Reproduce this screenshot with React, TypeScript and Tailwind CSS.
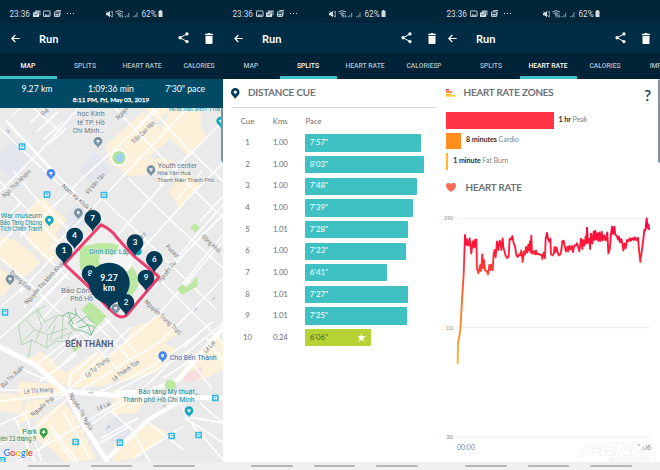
import React from "react";

const proxima = "font-[Lato,sans-serif]";
const roboto = "font-[Roboto,sans-serif]";

function PhotoIcon() {
  return (
    <svg className="h-[7.5px] w-[7.5px]" viewBox="0 0 16 16">
      <rect x="1" y="2" width="14" height="12" rx="1" fill="none" stroke="#cdd6dc" strokeWidth="2" />
      <path d="M3 12l3-4 3 3 2-2 3 3z" fill="#cdd6dc" />
    </svg>
  );
}

function MailIcon() {
  return (
    <svg className="h-[7.5px] w-[7.5px]" viewBox="0 0 16 16">
      <path d="M4 1h12v10h-2V4H4z" fill="#aebbc5" />
      <rect x="0" y="5" width="13" height="10" rx="1" fill="#dbe2e6" />
      <path d="M2 8l4 3 5-4" stroke="#012a41" strokeWidth="1.6" fill="none" />
    </svg>
  );
}

function GalleryIcon() {
  return (
    <svg className="h-[7.5px] w-[7.5px]" viewBox="0 0 16 16">
      <path d="M5 1h10v10" fill="none" stroke="#cdd6dc" strokeWidth="2" />
      <rect x="1" y="4" width="11" height="10" rx="1" fill="none" stroke="#dbe2e6" strokeWidth="2" />
      <path d="M3 12V8h7v4z" fill="#cdd6dc" />
    </svg>
  );
}

function StatusBar({ icons }: { icons: React.ReactNode[] }) {
  return (
    <div className={`${roboto} flex h-[23px] shrink-0 items-end bg-[#01263a] pb-[3.5px] pl-[9.5px] text-[#d5dde2]`}>
      <div className="flex w-[95px] items-center">
        <span className="w-[23.5px] text-[8.2px] leading-[12px]">23:36</span>
        <div className="flex gap-[2.8px]">
          {icons.map((icon, i) => (
            <React.Fragment key={i}>{icon}</React.Fragment>
          ))}
        </div>
        <div className="ml-[6px] flex gap-[1.6px]">
          <i className="h-[1.2px] w-[1.4px] bg-[#d5dde2]" />
          <i className="h-[1.2px] w-[1.4px] bg-[#d5dde2]" />
          <i className="h-[1.2px] w-[1.4px] bg-[#d5dde2]" />
        </div>
      </div>
      <div className="flex h-[12px] items-center">
        <svg className="h-[10px] w-[37px]" viewBox="0 0 111 30">
          <path d="M3 12h4l8-6v19l-8-6H3z" fill="#d5dde2" />
          <path d="M4 7l18 18M17 6l4 5M22 6v18" stroke="#d5dde2" strokeWidth="2" fill="none" />
          <path d="M31 9q11-8 23 0M35 14q7-5 15 0M39 18q4-3 7 0" stroke="#bccad2" strokeWidth="2.8" fill="none" />
          <path d="M42 24v-7m5 9v-8l-3 4m8-6v9l3-4" stroke="#bccad2" strokeWidth="2" fill="none" />
          <path d="M61 25V21M66 25v-7M71 25V11M86 25v-4M91 25v-7M96 25V10" stroke="#7f95a2" strokeWidth="3.2" />
        </svg>
        <span className="w-[16.5px] whitespace-nowrap text-[8.2px] leading-[12px]">62%</span>
        <svg className="h-[7px] w-[5px]" viewBox="0 0 10 14">
          <path d="M3 0h4v2h2v12H1V2h2z" fill="#d5dde2" />
        </svg>
      </div>
    </div>
  );
}

function AppBar() {
  return (
    <div className={`${proxima} flex h-[30px] shrink-0 items-center bg-[#002d46] pl-[10.5px] pr-[9.8px] text-white`}>
      <svg className="h-[9px] w-[9px]" viewBox="0 0 27 27">
        <path d="M26 13.5H3M13 3L2.500 13.500 13 24" fill="none" stroke="#fff" strokeWidth="3.400" />
      </svg>
      <span className="ml-[19.5px] text-[11px] font-bold leading-none tracking-[0.1px]">Run</span>
      <svg className="ml-auto h-[11.5px] w-[11px]" viewBox="0 0 33 35">
        <path d="M27 6L6 17.500 27 29" stroke="#fff" strokeWidth="3" fill="none" />
        <circle cx="27" cy="6" r="5" fill="#fff" />
        <circle cx="6" cy="17.500" r="5" fill="#fff" />
        <circle cx="27" cy="29" r="5" fill="#fff" />
      </svg>
      <svg className="ml-[16px] h-[11px] w-[8px]" viewBox="0 0 24 33">
        <path d="M0 2h7l2-2h6l2 2h7v4H0zM1.500 8h21v22q0 3-3 3h-15q-3 0-3-3z" fill="#fff" />
      </svg>
    </div>
  );
}

function Tabs({ active, shifted = false }: { active: string; shifted?: boolean }) {
  return (
    <div className={`${roboto} h-[26px] shrink-0 overflow-hidden bg-[#012338]`}>
      <div className={`flex h-full w-[285px] ${shifted ? "-ml-[31px]" : ""}`}>
        {["MAP", "SPLITS", "HEART RATE", "CALORIES", "IMPACT"].map((t) => (
          <div
            key={t}
            className={`flex h-full w-[57px] items-center justify-center whitespace-nowrap border-b-[3px] pr-[1px] pt-[3px] text-[6.800px] font-medium ${
              t === active ? "border-[#3fc1c3] text-white" : "border-transparent text-[#b3c0c8]"
            }`}
          >
            {t}
          </div>
        ))}
      </div>
    </div>
  );
}

function NavBar() {
  return (
    <div className="flex h-[8px] shrink-0 items-start gap-[21px] bg-[#f0f0f0] pl-[28px] pt-[3px]">
      <i className="h-[2px] w-[41.5px] rounded-full bg-[#b5b5b5]" />
      <i className="h-[2px] w-[41.5px] rounded-full bg-[#b5b5b5]" />
      <i className="h-[2px] w-[41.5px] rounded-full bg-[#b5b5b5]" />
    </div>
  );
}

function Label(p: {
  x: number;
  y: number;
  w: number;
  t: string;
  c?: string;
  s?: number;
  r?: number;
  b?: number;
}) {
  return (
    <text
      x={p.x}
      y={p.y}
      textLength={p.w}
      lengthAdjust="spacingAndGlyphs"
      fill={p.c ?? "#74767b"}
      fontSize={p.s ?? 19}
      fontWeight={p.b ?? 400}
      stroke="#f4f4f4"
      strokeOpacity="0.7"
      strokeWidth="2.500"
      paintOrder="stroke"
      transform={p.r ? `rotate(${p.r} ${p.x} ${p.y})` : undefined}
    >
      {p.t}
    </text>
  );
}

function Cue({ x, y, n }: { x: number; y: number; n: string }) {
  return (
    <g>
      <path d={`M${x} ${y + 40}C${x - 5} ${y + 24} ${x - 25} ${y + 19} ${x - 25} ${y}a25 25 0 0 1 50 0C${x + 25} ${y + 19} ${x + 5} ${y + 24} ${x} ${y + 40}z`} fill="#033a55" />
      <text x={x} y={y + 7} textAnchor="middle" fontSize="24" fontWeight="700" fontFamily="Lato, sans-serif" fill="#fff">
        {n}
      </text>
    </g>
  );
}

function Poi({ x, y, c, s = 1 }: { x: number; y: number; c: string; s?: number }) {
  return (
    <g transform={`translate(${x} ${y}) scale(${s})`}>
      <path d="M0 20C-2 11-13 9-13-1a13 13 0 0 1 26 0C13 9 2 11 0 20z" fill={c} />
      <path d="M-5-5H5L4 2H-4z" fill="#e9f1f7" />
      <circle cx="0" cy="4.500" r="1.500" fill="#fff" />
    </g>
  );
}

function Bus({ x, y }: { x: number; y: number }) {
  return (
    <g transform={`translate(${x} ${y})`}>
      <rect x="-10" y="-10" width="20" height="20" rx="2" fill="#2fb8e8" />
      <rect x="-5" y="-6" width="10" height="10" rx="1.500" fill="#fff" />
      <path d="M-3-4h6v4h-6z" fill="#2fb8e8" />
      <path d="M-3.500 4v3M3.500 4v3" stroke="#fff" strokeWidth="2" />
    </g>
  );
}

function RouteMap() {
  return (
    <svg className={`${roboto} block h-[354px] w-[223px] shrink-0`} viewBox="0 0 669 1062">
      <rect width="669" height="1062" fill="#eaeaeb" />
      <g fill="#e3e7ed">
        <path d="M0 140L45 95 105 150 40 220 0 185zM235 185L285 130 335 185 280 235zM190 330L225 290 270 330 225 375zM310 960L350 920 400 965 360 1030z" />
      </g>
      <g fill="#fcf1d8">
        <path d="M315 115L430 10 510 90 445 150 520 155 495 195 385 205 330 160z" />
        <path d="M510 0H610L600 45 620 90 560 140 485 65z" />
        <path d="M430 0h80l-35 40zM505 250l50-65 45 45-60 75z" />
        <path d="M80 310l45-45 75 70-35 45 30 35-40 55-55-50-25-30 20-30zM0 385l45 10 50 40 25 30-55 50-65-65z" />
        <path d="M0 480l45 35-35 50-10-5zM80 755l45-25 70 65 95-65 40 30-95 75-45-2-40-35z" />
        <path d="M210 840l65-60 90-65 35-60 50-12 35-30 55 60-60 40-60 65-105 55z" />
        <path d="M365 785l100-85 65 20-55 70-120 35z" />
        <path d="M55 820l120 10 15 25-50 10-85 15zM0 855l70 8-5 55-65-10z" />
        <path d="M110 940l80-60 40 55 60 120-95 7-55-50-45-25z" />
        <path d="M80 880l90-12-60 60-60 20z" />
        <path d="M340 845l110 10-40 60-75 5zM340 1010l110-65 55 30-95 75-70 12z" />
        <path d="M525 815l70-90 74 5v55l-60 30zM600 735l45-65 24 30v60z" />
      </g>
      <path d="M545 800l65-25-10 35-40 15z" fill="#f7dedd" />
      <g stroke="#fff" fill="none" strokeWidth="4.500">
        <path d="M-5 255L130 120 240-5M65-5L35 25M0 60L60 120 190 240 420 455 669 705M300 265L420 380 650 605" />
        <path d="M100 0l80 70M90 45l60-55M110 70l65-60M130 95l55-50M145 110l55-50" />
        <path d="M60 385L145 310 270 190 480 0M150 425L270 310 420 150 560 5M340 395L425 300 550 160 669 40" />
        <path d="M345 0L430 90 560 225 669 330M410 60L470-5M455 0l95 110 119 110M385 210L505 330 669 480" />
        <path d="M425 425L560 275 669 165M485 500L560 415 669 290M530 550L669 380M480 230l95-100M530 275l75-85M600 340l69-75" />
        <path d="M120 280l110 110M40 190l80 95M0 220l190 200M0 310l210 205M60 285L0 350M90 315L0 410" />
        <path d="M0 450l60 50 120 115M60 555L160 445M0 600L110 500M70 600l120-120M115 645l95-100" />
        <path d="M0 690l120-105 80-85M190 620l180 180M255 565l155 170M290 650l110 115" />
        <path d="M150 765L300 620M180 775l150-140M245 800L395 655" />
        <path d="M100 775l130-95M120 820L230 740M60 780l130 60M0 845l120 5 80 5" />
        <path d="M200 850L355 720 475 620 669 400M225 860L340 785 475 705 570 615 669 510M280 860L430 790 545 715 640 640" />
        <path d="M0 880l80-10 110-10M0 950l100-45 110-50M0 1010l120-60 85-80M50 1062l130-75 220-130" />
        <path d="M75 915l50 145M45 930l60 132M115 1030l45-55 60 87M150 950l85 112M190 910l80 140" />
        <path d="M245 970l85-60 120-65M230 900l45 60M335 910l75 70M305 990l110-60M290 1010l100-55 60 107M440 940l110 85M445 850l-60 50" />
        <path d="M345 850l105-55 110-60 109-90M490 810l115-75M410 860l100-95M560 745l75 95M620 690l49 70M550 720l80-75" />
        <path d="M555 925l114 20M550 930l45 25 74 50M530 860l30 65 35 50M595 970l74 85M600 885l69 60M400 1050l150-95" />
      </g>
      <g stroke="#fff" fill="none" strokeLinecap="round">
        <path d="M-5 715L105 770 195 850 340 862 669 870" strokeWidth="15" />
        <path d="M200 855L250 950 325 1065" strokeWidth="15" />
        <path d="M355 855L445 850 535 815 669 660" strokeWidth="13" />
        <path d="M325 1050L445 935 540 880" strokeWidth="13" />
        <path d="M20 40L155 185 300 330" strokeWidth="7" />
        <path d="M205 835L215 800 290 735" strokeWidth="6" />
        <path d="M90 610L300 395" strokeWidth="6" />
        <path d="M380 625L560 430 669 320" strokeWidth="6" />
      </g>
      <path d="M193 468L303 350 474 504 370 625z" fill="#efefef" />
      <g fill="#bbe7a1">
        <path d="M240 435q-5-20 30-25 10 5 32 22l-8 38-50 18q-8-15-4-53zM270 412q45-14 86 0 0 15-18 30l-40-5zM250 485l42-30 25 30-40 25zM390 470q28 25 25 65l-25 35q-30-40 0-100z" />
        <path d="M245 605l25-25 50 45-30 32zM570 360l14-14 16 13-14 13zM530 545l15-17 15 10 32-33v30l-45 25zM215 720l15-9 12 8-19 14z" />
        <circle cx="511" cy="832" r="17" />
      </g>
      <circle cx="357" cy="149" r="25" fill="#fff" />
      <circle cx="357" cy="149" r="20" fill="#b2e290" />
      <path d="M345 146q15-18 26-5 5 16-7 22-18 3-19-17z" fill="#9fd0f5" />
      <circle cx="367" cy="462" r="28" fill="#f5f5f5" stroke="#fff" strokeWidth="5" />
      <g fill="none" stroke="#a9d3ae" strokeWidth="2.600">
        <path d="M135 593l-40 25-40 35 10 58 30-15 45 23 30-20 30 2 18-34-15-42-30-3-38 20-25-40M78 635l25 30-40 40M103 665l40 15 60-20M143 680l-4 40M165 650l-16 50M110 610l15 45-18 45M173 625l-35 45M95 695l-10 55M190 625l-5 70M155 700l55-25" />
      </g>
      <path d="M185 625l20-12 25 8 30 28 25 8-12 25-20-12-28-5-20-22 25-22-5-20M230 645l30-20 20 20M235 660l30-8 10 30M205 615l15 35" stroke="#6cb880" strokeWidth="2.600" fill="none" />
      <g stroke="#a3abc6" strokeWidth="2" fill="none">
        <path d="M18 64l10 8m-3-7l4 8-9-1M264 854h14l-5-4m5 4l-5 4M318 963l12-8-8 0M485 901l12-8-8 0M600 859h-14l5-4m-5 4l5 4M582 610l8-9-7 1M637 578l8-9-7 1" />
      </g>
      <g>
        <Label x={402} y={108} w={88} r={-44} t="Trần Cao Vân" />
        <Label x={355} y={36} w={45} r={-47} t="Nguyễ" />
        <Label x={130} y={24} w={24} r={-45} t="Điệ" />
        <Label x={14} y={270} w={112} r={-44} t="Ngô Thời Nhiệm" />
        <Label x={184} y={236} w={120} r={42} t="Nam Kỳ Khởi N" />
        <Label x={264} y={260} w={78} r={-48} t="Võ Văn Tần" />
        <Label x={27} y={494} w={82} r={43} t="Trương Định" />
        <Label x={82} y={590} w={164} r={-48} t="Nguyễn Thị Minh Khai" />
        <Label x={496} y={418} w={47} r={44} t="Pasteur" />
        <Label x={604} y={388} w={70} r={43} t="Đồng Khởi" />
        <Label x={480} y={524} w={76} r={-50} t="Nguyễn Du" />
        <Label x={432} y={583} w={144} r={43} t="Nguyễn Trung Trực" />
        <Label x={425} y={395} w={22} r={-48} t="ữ s" />
        <Label x={10} y={840} w={88} r={-44} t="Bùi Thị Xuân" />
        <Label x={72} y={857} w={88} r={-4} t="Lê Thị Riêng" />
        <Label x={98} y={926} w={84} r={-38} t="Nguyễn Trãi" />
        <Label x={206} y={859} w={126} r={60} t="Nguyễn Thị Nghĩa" />
        <Label x={262} y={808} w={84} r={-38} t="Lý Tự Trọng" />
        <Label x={341} y={820} w={96} r={-35} t="Lê Thánh Tôn" />
        <Label x={294} y={908} w={43} r={-24} t="Lê Lai" />
        <Label x={618} y={736} w={42} r={-47} t="Lê Lợi" />
      </g>
      <g>
        <Label x={232} y={25} w={82} s={23} c="#667684" t="học Kinh" />
        <Label x={232} y={50} w={82} s={23} c="#667684" t="tế TP. Hồ" />
        <Label x={218} y={75} w={96} s={23} c="#667684" t="Chí Minh..." />
        <Label x={507} y={10} w={153} s={21} c="#1a9ca9" t="Nhà hát Bến Thà" />
        <Label x={473} y={181} w={118} s={23} c="#667684" t="Youth center" />
        <Label x={472} y={202} w={100} s={18} c="#667684" t="Nhà Văn Hoá" />
        <Label x={472} y={222} w={184} s={18} c="#667684" t="Thanh Niên Thành Phố..." />
        <Label x={3} y={329} w={123} s={23} c="#168997" t="War museum" />
        <Label x={0} y={350} w={126} s={19} c="#168997" t="Bảo Tàng Chứng" />
        <Label x={0} y={370} w={126} s={19} c="#168997" t="Tích Chiến Tranh" />
        <Label x={268} y={439} w={122} s={23} c="#198f99" t="Dinh Độc Lập" />
        <Label x={183} y={555} w={130} s={23} c="#667684" t="Bảo Công an" />
        <Label x={211} y={579} w={68} s={23} c="#667684" t="Phố Hồ" />
        <Label x={196} y={716} w={144} s={26} b={700} c="#59627b" t="BẾN THÀNH" />
        <Label x={509} y={757} w={141} s={24} c="#376fb5" t="Chợ Bến Thành" />
        <Label x={415} y={858} w={169} s={24} c="#168997" t="Bảo tàng Mỹ thuật" />
        <Label x={368} y={882} w={216} s={24} c="#168997" t="Thành phố Hồ Chí Minh" />
        <Label x={67} y={978} w={44} s={24} c="#2b873e" t="Park" />
        <Label x={0} y={999} w={108} s={19} c="#2b873e" t="iên 23 tháng 9" />
      </g>
      <Poi x={294} y={101} c="#7790a1" />
      <Poi x={453} y={186} c="#7790a1" />
      <Poi x={235} y={315} c="#7790a1" />
      <Poi x={30} y={514} c="#7790a1" />
      <Poi x={153} y={197} c="#4485ef" />
      <Poi x={488} y={744} c="#4485ef" />
      <Poi x={148} y={337} c="#14a7ba" />
      <Poi x={567} y={909} c="#14a7ba" />
      <Poi x={662} y={40} c="#14a7ba" />
      <circle cx="413" cy="430" r="12" fill="#14a7ba" />
      <g>
        <path d="M131 994C129 984 119 983 119 972a12 12 0 0 1 24 0C143 983 133 984 131 994z" fill="#34a047" />
        <path d="M131 964l6 11h-12zM130 974h2v5h-2z" fill="#fff" />
      </g>
      <Bus x={66} y={116} />
      <Bus x={141} y={260} />
      <Bus x={312} y={261} />
      <Bus x={15} y={613} />
      <Bus x={646} y={870} />
      <Bus x={227} y={1002} />
      <Bus x={360} y={1004} />
      <Bus x={515} y={984} />
      <Bus x={596} y={981} />
      <Bus x={7} y={1057} />
      <path d="M193 468L303 350Q335 366 349 387L376 417 404 446 474 504Q477 506 474 511L380 622Q366 632 350 622L327 602 265 535Z" fill="none" stroke="#ef3e6d" strokeWidth="9" strokeLinejoin="round" />
      <Cue x={278} y={331} n="7" />
      <Cue x={224} y={384} n="4" />
      <Cue x={192} y={429} n="1" />
      <Cue x={405} y={404} n="3" />
      <Cue x={463} y={454} n="6" />
      <Cue x={438} y={510} n="9" />
      <Cue x={270} y={497} n="8" />
      <Cue x={378} y={583} n="2" />
      <Poi x={347} y={602} c="#7790a1" />
      <path d="M327 607C322 588 315 588 296 577A61 61 0 1 1 360 577C340 588 332 590 327 607z" fill="#033a55" />
      <g fill="#fff" fontFamily="Lato, sans-serif" fontWeight="700" fontSize="26" textAnchor="middle">
        <text x="327" y="519" textLength="52">9.27</text>
        <text x="327" y="550" textLength="36">km</text>
      </g>
      <text x="10" y="1043" fontSize="29" fontFamily="Lato, sans-serif" fontWeight="700" textLength="89" stroke="#fff" strokeWidth="4" paintOrder="stroke">
        <tspan fill="#4285f4">G</tspan>
        <tspan fill="#ea4335">o</tspan>
        <tspan fill="#fbbc05">o</tspan>
        <tspan fill="#4285f4">g</tspan>
        <tspan fill="#34a853">l</tspan>
        <tspan fill="#ea4335">e</tspan>
      </text>
      <path d="M663 0h6v165q-6-4-6-12z" fill="#7c92a2" />
    </svg>
  );
}

const splits = [
  { km: "1.00", pace: "7'57\"", w: 115.7 },
  { km: "1.00", pace: "8'03\"", w: 118.5 },
  { km: "1.00", pace: "7'48\"", w: 111.7 },
  { km: "1.00", pace: "7'39\"", w: 107.7 },
  { km: "1.01", pace: "7'28\"", w: 102.7 },
  { km: "1.00", pace: "7'23\"", w: 100.5 },
  { km: "1.00", pace: "6'41\"", w: 81.7 },
  { km: "1.01", pace: "7'27\"", w: 102.3 },
  { km: "1.01", pace: "7'25\"", w: 101.3 },
  { km: "0.24", pace: "6'06\"", w: 65.7 },
];

const heading = "text-[9.800px] font-medium leading-none tracking-[-0.120px] text-[#64686b] [-webkit-text-stroke:0.200px_#64686b]";

function Splits() {
  return (
    <div className={`${proxima} flex-1 text-[#6d7174]`}>
      <div className="ml-[8px] flex h-[29px] items-center border-b border-[#dcdcdc]">
        <svg className="h-[11px] w-[8.500px]" viewBox="0 0 26 33">
          <path d="M13 33C9 25 0 22 0 12.500a13 12.500 0 0 1 26 0C26 22 17 25 13 33z" fill="#033a55" />
          <circle cx="13" cy="12" r="5" fill="#fff" />
        </svg>
        <span className={`ml-[8.500px] ${heading}`}>DISTANCE CUE</span>
      </div>
      <div className="mt-[8px] flex h-[12px] items-center text-[7.8px]">
        <span className="ml-[8px] w-[33px] text-center">Cue</span>
        <span className="w-[32.500px] text-center">Kms</span>
        <span className="ml-[9px]">Pace</span>
      </div>
      <div className="mt-[6.300px] flex flex-col gap-[4.350px]">
        {splits.map((s, i) => (
          <div key={i} className="flex h-[17.300px] items-center text-[7.8px]">
            <span className="ml-[8px] w-[33px] text-center">{i + 1}</span>
            <span className="w-[32.500px] text-center tracking-[-0.200px]">{s.km}</span>
            <div
              className={`ml-[8.800px] flex h-full items-center justify-between rounded-[1px] pl-[4.500px] pr-[5px] ${
                i === 9 ? "bg-[#b5d334] text-[#4c5c28]" : "bg-[#3fc1c3] text-white"
              }`}
              style={{ width: s.w }}
            >
              <span>{s.pace}</span>
              {i === 9 && (
                <svg className="h-[9px] w-[9px]" viewBox="0 0 24 24">
                  <path d="M12 0l3 8.500 9 .2-7.200 5.500 2.600 8.800L12 17.800 4.600 23l2.600-8.800L0 8.700l9-.2z" fill="#fff" />
                </svg>
              )}
            </div>
          </div>
        ))}
      </div>
    </div>
  );
}

const heartLine =
  "53,492 54,430 61,390 66,300 71,225 75,105 79,135 81,118 85,137 89,115 91,132 94,160 98,124 102,143 104,120 106,140 109,118 111,205 115,220 118,208 121,195 123,213 127,163 130,205 132,180 135,211 140,213 144,223 148,195 151,210 154,194 158,211 161,160 164,150 167,172 171,124 175,150 179,122 182,130 184,150 188,115 190,142 193,152 197,167 201,174 206,170 209,116 213,118 217,108 221,130 225,138 229,165 233,171 238,163 241,166 244,151 248,186 252,155 255,163 258,141 262,158 265,134 268,151 270,124 272,157 274,107 276,161 281,153 285,163 288,151 291,163 296,161 301,165 305,165 307,177 311,158 315,175 317,116 321,99 324,116 328,125 331,116 333,163 337,166 341,162 344,141 347,156 350,142 353,157 356,166 361,163 364,150 367,124 371,122 374,137 378,155 382,141 385,154 388,137 392,148 396,138 399,156 403,136 407,137 411,130 415,143 418,154 423,116 427,147 429,120 433,137 437,109 439,130 441,83 444,128 448,117 450,147 453,101 457,131 461,95 464,120 466,92 469,118 472,100 475,123 478,97 481,123 485,95 488,121 492,106 497,122 502,97 505,160 509,150 513,103 516,80 519,102 523,80 526,105 530,106 534,119 537,110 540,127 544,117 547,130 550,152 554,130 557,145 561,120 565,124 569,115 573,122 577,114 581,120 585,112 589,121 594,113 597,150 601,186 605,156 610,118 613,90 616,91 620,55 623,84 625,73 628,90";

function HeartRate() {
  return (
    <div className={`${proxima} relative flex flex-1 flex-col`}>
      <div className="flex h-[28px] items-center pl-[9px] pr-[9px]">
        <svg className="h-[8px] w-[9px]" viewBox="0 0 27 24">
          <path d="M0 0h9v5H0z" fill="#ef3d4e" />
          <path d="M0 6h19v6H0z" fill="#f8944d" />
          <path d="M0 14h14v4H0z" fill="#fdb827" />
          <path d="M0 18h27v5H0z" fill="#ffd338" />
        </svg>
        <span className={`ml-[8.500px] ${heading}`}>HEART RATE ZONES</span>
        <span className="ml-auto pt-[5px] text-[15px] leading-none text-[#143f59] [-webkit-text-stroke:0.300px_#143f59]">?</span>
      </div>
      <div className="flex flex-col gap-[4px] pl-[9px] pt-[5px] text-[7.200px] text-[#858585]">
        <div className="flex h-[16.500px] items-center gap-[5px]">
          <i className="h-full w-[107.500px] bg-[#fe3444]" />
          <span className="tracking-[-0.080px]"><b className="text-[#303030]">1 hr</b> Peak</span>
        </div>
        <div className="flex h-[16.500px] items-center gap-[5px]">
          <i className="h-full w-[15px] bg-[#ff8e1e]" />
          <span className="tracking-[-0.080px]"><b className="text-[#303030]">8 minutes</b> Cardio</span>
        </div>
        <div className="flex h-[16.500px] items-center gap-[5px]">
          <i className="h-full w-[2.300px] bg-[#ffb827]" />
          <span className="tracking-[-0.120px]"><b className="text-[#303030]">1 minute</b> Fat Burn</span>
        </div>
      </div>
      <div className="flex h-[30.500px] items-center pl-[9px] pt-[6px]">
        <svg className="h-[9px] w-[10px]" viewBox="0 0 30 27">
          <path d="M15 27Q0 16 0 8C0-2 12-3 15 5 18-3 30-2 30 8Q30 16 15 27z" fill="#f46b55" />
        </svg>
        <span className={`ml-[9.500px] ${heading}`}>HEART RATE</span>
      </div>
      <svg className="block h-[262px] w-[223px]" viewBox="-9 0 669 786">
        <defs>
          <linearGradient id="pulse" gradientUnits="userSpaceOnUse" x1="0" y1="60" x2="0" y2="490">
            <stop offset="0" stopColor="#fa003f" />
            <stop offset=".25" stopColor="#ff2438" />
            <stop offset=".4" stopColor="#ff4a31" />
            <stop offset=".7" stopColor="#ff8523" />
            <stop offset="1" stopColor="#ffb327" />
          </linearGradient>
        </defs>
        <path d="M51 55H630M51 383H630M51 712H630" stroke="#eee" strokeWidth="3" />
        <g fill="#858585" fontSize="18">
          <text x="12" y="61" textLength="27" lengthAdjust="spacingAndGlyphs">190</text>
          <text x="17" y="390" textLength="23" lengthAdjust="spacingAndGlyphs">110</text>
          <text x="19" y="718" textLength="20" lengthAdjust="spacingAndGlyphs">30</text>
          <text x="51" y="750" fontSize="21" textLength="54" lengthAdjust="spacingAndGlyphs">00:00</text>
          <text x="578" y="750" fontSize="21" textLength="56" lengthAdjust="spacingAndGlyphs">01:06</text>
        </g>
        <polyline points={heartLine} fill="none" stroke="url(#pulse)" strokeWidth="5.600" strokeLinejoin="round" />
        <g fontFamily="Liberation Sans, sans-serif" fontWeight="700" fontStyle="italic" fill="#fff" stroke="#f1f1f1" strokeWidth="4" paintOrder="stroke">
          <path d="M416 768l26-38h9l-26 38z" />
          <text x="430" y="765" fontSize="48" textLength="190" lengthAdjust="spacingAndGlyphs">GENK</text>
          <text x="508" y="790" fontSize="19" textLength="116" lengthAdjust="spacingAndGlyphs">GENK.VN</text>
        </g>
      </svg>
    </div>
  );
}

export default function App() {
  return (
    <div className="flex h-[470px] w-[660px] overflow-hidden bg-white">
      <section className="flex w-[223px] shrink-0 flex-col overflow-hidden">
        <StatusBar icons={[<MailIcon />, <PhotoIcon />, <GalleryIcon />]} />
        <AppBar />
        <Tabs active="MAP" />
        <div className={`${proxima} flex h-[29px] shrink-0 flex-col bg-[#004a66] pt-[5px] text-white`}>
          <div className="flex h-[11px] items-center text-[8.700px] leading-none">
            <span className="w-[74px] text-center">9.27 km</span>
            <span className="w-[74px] text-center">1:09:36 min</span>
            <span className="w-[74px] text-center">7'30" pace</span>
          </div>
          <div className="mt-[1px] pr-[1px] text-center text-[6.500px] leading-[7px] tracking-[-0.050px] [-webkit-text-stroke:0.250px_white]">
            8:11 PM, Fri, May 03, 2019
          </div>
        </div>
        <RouteMap />
        <NavBar />
      </section>
      <section className="flex w-[214px] shrink-0 flex-col overflow-hidden">
        <div className="flex w-[223px] flex-1 flex-col">
          <StatusBar icons={[<PhotoIcon />, <MailIcon />, <GalleryIcon />]} />
          <AppBar />
          <Tabs active="SPLITS" />
          <Splits />
          <NavBar />
        </div>
      </section>
      <section className="flex w-[223px] shrink-0 flex-col overflow-hidden">
        <StatusBar icons={[<PhotoIcon />, <MailIcon />, <GalleryIcon />]} />
        <AppBar />
        <Tabs active="HEART RATE" shifted />
        <div className="relative flex flex-1 flex-col">
          <HeartRate />
          <i className="absolute right-0 top-0 h-[84px] w-[2px] rounded-l bg-[#7c92a2]" />
        </div>
        <NavBar />
      </section>
    </div>
  );
}
